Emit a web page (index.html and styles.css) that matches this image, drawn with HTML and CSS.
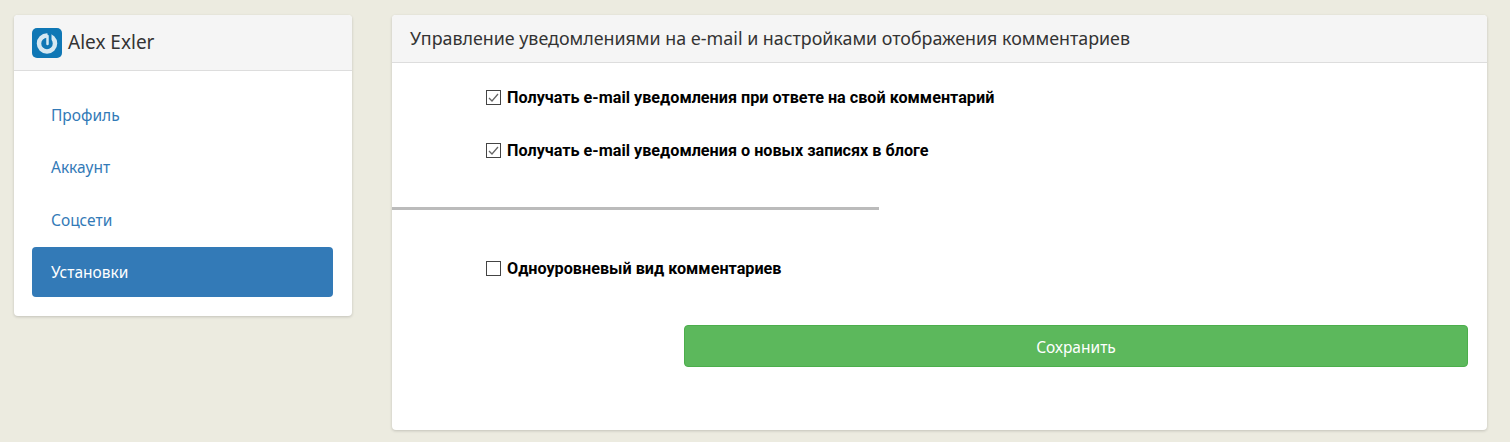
FILE: index.html
```html
<!DOCTYPE html>
<html lang="ru">
<head>
    <meta charset="UTF-8">
    <meta name="viewport" content="width=device-width, initial-scale=1.0">
    <title>Установки</title>
    <link rel="stylesheet" href="styles.css">
</head>
<body>
    <div class="page">
        <aside class="panel sidebar">
            <div class="panel-head user-head">
                <svg class="avatar" width="30" height="30" viewBox="0 0 30 30">
                    <rect width="30" height="30" rx="5" fill="#0f77b5"/>
                    <circle cx="15" cy="15.5" r="8" fill="none" stroke="#d5e8f2" stroke-width="4.5"/>
                    <path d="M17.5 5v10" stroke="#0f77b5" stroke-width="4"/>
                    <path d="M15.5 8v8" stroke="#d5e8f2" stroke-width="2.5" stroke-linecap="round"/>
                </svg>
                <span>Alex Exler</span>
            </div>
            <nav class="side-nav">
                <a href="#">Профиль</a>
                <a href="#">Аккаунт</a>
                <a href="#">Соцсети</a>
                <a href="#" class="active">Установки</a>
            </nav>
        </aside>
        <main class="panel content">
            <div class="panel-head">Управление уведомлениями на e-mail и настройками отображения комментариев</div>
            <form class="settings">
                <label class="check-row"><input type="checkbox" checked> Получать e-mail уведомления при ответе на свой комментарий</label>
                <label class="check-row second"><input type="checkbox" checked> Получать e-mail уведомления о новых записях в блоге</label>
                <hr class="divider">
                <label class="check-row third"><input type="checkbox"> Одноуровневый вид комментариев</label>
                <div class="actions">
                    <button type="button" class="save-btn">Сохранить</button>
                </div>
            </form>
        </main>
    </div>
</body>
</html>
```

FILE: styles.css
```css
body {
    margin: 0;
    background: #ecebe0;
    font-family: "Noto Sans", "Open Sans", sans-serif;
    font-size: 15.5px;
    color: #333;
}
.page {
    display: flex;
    align-items: flex-start;
    gap: 40px;
    padding: 15px 23px 12px 14px;
}
.panel {
    background: #fff;
    border-radius: 4px;
    box-shadow: 0 1px 3px rgba(0, 0, 0, 0.18);
    overflow: hidden;
}
.panel-head {
    background: #f5f5f5;
    border-bottom: 1px solid #ddd;
    padding: 0 18px;
    height: 47px;
    line-height: 47px;
    font-size: 17.85px;
}
.sidebar {
    width: 338px;
    flex-shrink: 0;
}
.user-head {
    display: flex;
    align-items: center;
    gap: 6px;
    height: 55px;
    line-height: 53px;
    font-size: 19px;
}
.side-nav {
    display: flex;
    flex-direction: column;
    gap: 2.5px;
    padding: 18.5px 19px 19px 18px;
}
.side-nav a {
    display: block;
    height: 50px;
    line-height: 51px;
    padding: 0 19px;
    border-radius: 4px;
    color: #337ab7;
    text-decoration: none;
}
.side-nav a.active {
    background: #337ab7;
    color: #fff;
}
.content {
    flex: 1;
    height: 415px;
}
.check-row {
    display: flex;
    align-items: center;
    gap: 6px;
    margin-left: 94px;
    height: 24px;
    font-weight: bold;
    font-size: 16.2px;
    font-family: Roboto, sans-serif;
    color: #000;
}
.settings {
    padding-top: 22px;
}
.check-row input {
    appearance: none;
    width: 15px;
    height: 15px;
    margin: 0;
    border: 1px solid #444;
    background: #fff;
    flex-shrink: 0;
}
.check-row input:checked {
    background: no-repeat center url("data:image/svg+xml,%3Csvg xmlns='http://www.w3.org/2000/svg' width='13' height='13'%3E%3Cpath d='M2 7l3 3 6-7' fill='none' stroke='%23666' stroke-width='1.3'/%3E%3C/svg%3E");
}
.check-row.second {
    margin-top: 29px;
}
.divider {
    width: 487px;
    height: 3px;
    margin: 45px 0 0;
    border: 0;
    background: #bbb;
}
.check-row.third {
    margin-top: 46px;
}
.actions {
    display: flex;
    justify-content: flex-end;
    margin-top: 45px;
    padding-right: 19px;
}
.save-btn {
    width: 784px;
    height: 42px;
    padding-top: 2px;
    background: #5cb85c;
    border: 1px solid #4cae4c;
    border-radius: 4px;
    color: #fff;
    font: inherit;
}
```
